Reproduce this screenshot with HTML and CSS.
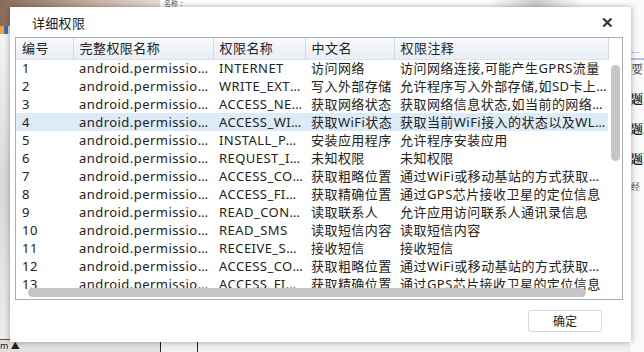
FILE: index.html
```html
<!doctype html>
<html lang="zh-CN">
<head>
    <meta charset="UTF-8">
    <title>详细权限</title>
    <link rel="stylesheet" href="styles.css">
</head>
<body>

<div class="app">
    <div class="app-left">
        <div class="photo"></div>
        <div class="toolbar"></div>
        <div class="side-list"></div>
        <div class="side-foot">m ▲</div>
    </div>
    <div class="app-main">
        <div class="main-top">名称 ：</div>
        <div class="main-body"></div>
        <div class="main-foot">
            <span class="cell"></span>
            <span class="cell"></span>
        </div>
    </div>
    <div class="app-right">
        <p class="blue">...</p>
        <p>要</p>
        <p class="bold">题</p>
        <p class="bold">题</p>
        <p class="bold">题</p>
        <p class="small">经</p>
    </div>
</div>

<div class="modal-dialog">
    <div class="header">
        <h3>详细权限</h3>
        <a href="#" class="close">✕</a>
    </div>
    <div class="grid-box">
        <table class="grid">
            <colgroup>
                <col class="c-num">
                <col class="c-full">
                <col class="c-name">
                <col class="c-cn">
                <col class="c-note">
            </colgroup>
            <thead>
                <tr>
                    <th>编号</th>
                    <th>完整权限名称</th>
                    <th>权限名称</th>
                    <th>中文名</th>
                    <th>权限注释</th>
                </tr>
            </thead>
            <tbody>
                <tr><td>1</td><td>android.permission.INTERNET</td><td>INTERNET</td><td>访问网络</td><td>访问网络连接,可能产生GPRS流量</td></tr>
                <tr><td>2</td><td>android.permission.WRITE_EXTERNAL_STORAGE</td><td>WRITE_EXTERNAL_STORAGE</td><td>写入外部存储</td><td>允许程序写入外部存储,如SD卡上写文件</td></tr>
                <tr><td>3</td><td>android.permission.ACCESS_NETWORK_STATE</td><td>ACCESS_NETWORK_STATE</td><td>获取网络状态</td><td>获取网络信息状态,如当前的网络连接是否有效</td></tr>
                <tr class="selected"><td>4</td><td>android.permission.ACCESS_WIFI_STATE</td><td>ACCESS_WIFI_STATE</td><td>获取WiFi状态</td><td>获取当前WiFi接入的状态以及WLAN热点的信息</td></tr>
                <tr><td>5</td><td>android.permission.INSTALL_PACKAGES</td><td>INSTALL_PACKAGES</td><td>安装应用程序</td><td>允许程序安装应用</td></tr>
                <tr><td>6</td><td>android.permission.REQUEST_INSTALL_PACKAGES</td><td>REQUEST_INSTALL_PACKAGES</td><td>未知权限</td><td>未知权限</td></tr>
                <tr><td>7</td><td>android.permission.ACCESS_COARSE_LOCATION</td><td>ACCESS_COARSE_LOCATION</td><td>获取粗略位置</td><td>通过WiFi或移动基站的方式获取用户错略的经纬度信息</td></tr>
                <tr><td>8</td><td>android.permission.ACCESS_FINE_LOCATION</td><td>ACCESS_FINE_LOCATION</td><td>获取精确位置</td><td>通过GPS芯片接收卫星的定位信息</td></tr>
                <tr><td>9</td><td>android.permission.READ_CONTACTS</td><td>READ_CONTACTS</td><td>读取联系人</td><td>允许应用访问联系人通讯录信息</td></tr>
                <tr><td>10</td><td>android.permission.READ_SMS</td><td>READ_SMS</td><td>读取短信内容</td><td>读取短信内容</td></tr>
                <tr><td>11</td><td>android.permission.RECEIVE_SMS</td><td>RECEIVE_SMS</td><td>接收短信</td><td>接收短信</td></tr>
                <tr><td>12</td><td>android.permission.ACCESS_COARSE_LOCATION</td><td>ACCESS_COARSE_LOCATION</td><td>获取粗略位置</td><td>通过WiFi或移动基站的方式获取用户错略的经纬度信息</td></tr>
                <tr><td>13</td><td>android.permission.ACCESS_FINE_LOCATION</td><td>ACCESS_FINE_LOCATION</td><td>获取精确位置</td><td>通过GPS芯片接收卫星的定位信息</td></tr>
            </tbody>
        </table>
        <div class="vscroll"><span class="thumb"></span></div>
        <div class="hscroll"><span class="thumb"></span></div>
    </div>
    <div class="footer">
        <a href="#" class="btn">确定</a>
    </div>
</div>

</body>
</html>
```

FILE: styles.css
```css
* {
    margin: 0;
    padding: 0;
    box-sizing: border-box;
}
a {
    color: #222;
    text-decoration: none;
}
body {
    width: 644px;
    height: 352px;
    overflow: hidden;
    position: relative;
    background: #f2f2f2;
    font-family: "Noto Sans", "Noto Sans CJK SC", sans-serif;
    color: #222;
}

/* 背后的主窗口 */
.app {
    display: flex;
    height: 352px;
}
.app-left {
    width: 160px;
    display: flex;
    flex-direction: column;
    background: #e9e9e9;
}
.photo {
    height: 26px;
    background: linear-gradient(90deg, #8a6a58, #c9b3a6 60%, #e8ddd6);
}
.toolbar {
    height: 8px;
    background: linear-gradient(90deg, #f3a53a 0 4px, #3b6fb6 4px 8px, #dcdcdc 8px);
}
.side-list {
    flex: 1;
    background: linear-gradient(180deg, #f4f4f4, #d8d8d8 50%, #ececec);
    border-bottom: 1px solid #555;
}
.side-foot {
    height: 12px;
    font-size: 9px;
    line-height: 12px;
    background: #e0e0e0;
}
.app-main {
    flex: 1;
    display: flex;
    flex-direction: column;
    background: #fff;
}
.main-top {
    height: 8px;
    font-size: 7px;
    line-height: 7px;
    padding-left: 4px;
    color: #555;
    background: linear-gradient(90deg, #fff 70%, #ccc 80%, #fff 90%);
}
.main-body {
    flex: 1;
}
.main-foot {
    height: 12px;
    display: flex;
    background: #f0f0f0;
}
.main-foot .cell {
    width: 37px;
    border-left: 1px solid #222;
}
.app-right {
    width: 14px;
    overflow: hidden;
    background: #fafafa;
    font-family: "Noto Serif CJK SC", "Noto Sans CJK SC", serif;
    font-size: 12px;
    padding-top: 44px;
}
.app-right p {
    height: 30px;
    padding-left: 1px;
}
.app-right .blue {
    height: 16px;
    color: #3b6fb6;
    font-size: 8px;
    border-bottom: 2px solid #a9c7ea;
}
.app-right .bold {
    font-weight: bold;
}
.app-right .small {
    font-size: 9px;
}

/* 详细权限弹框 */
.modal-dialog {
    position: absolute;
    left: 10px;
    top: 7px;
    width: 621px;
    height: 335px;
    background: #fff;
    box-shadow: 0 0 6px rgba(0,0,0,0.35);
    display: flex;
    flex-direction: column;
}
.header {
    height: 30px;
    display: flex;
    align-items: center;
    justify-content: space-between;
    padding: 0 17px 0 22px;
}
.header h3 {
    font-family: "Noto Sans CJK SC", sans-serif;
    font-size: 13px;
    font-weight: normal;
    color: #222;
    letter-spacing: 0.3px;
}
.header .close {
    font-size: 15px;
    font-weight: bold;
    color: #333;
}
.grid-box {
    position: relative;
    margin-left: 5px;
    width: 608px;
    height: 263px;
    border: 1px solid #a9aeb3;
    overflow: hidden;
}
.grid {
    table-layout: fixed;
    border-collapse: collapse;
    width: 592px;
    font-size: 13px;
    letter-spacing: 0.45px;
    line-height: 16px;
    color: #222;
}
.c-num { width: 57px; }
.c-full { width: 140px; }
.c-name { width: 92px; }
.c-cn { width: 89px; }
.c-note { width: 214px; }
.grid th,
.grid td {
    text-align: left;
    font-weight: normal;
    white-space: nowrap;
    overflow: hidden;
    text-overflow: ellipsis;
    padding: 0 1px 0 6px;
}
.grid th {
    height: 21px;
    background: linear-gradient(180deg, #f7f9fc, #e8eef5);
    border-right: 1px solid #d3dae2;
    border-bottom: 1px solid #dde3ea;
}
.grid td {
    height: 18px;
}
.grid .selected td {
    background: #dcebf7;
}
.vscroll {
    position: absolute;
    right: 2px;
    top: 27px;
    width: 9px;
    height: 96px;
}
.vscroll .thumb {
    display: block;
    height: 100%;
    border-radius: 5px;
    background: #c6c6c6;
}
.hscroll {
    position: absolute;
    left: 12px;
    bottom: 2px;
    width: 558px;
    height: 9px;
}
.hscroll .thumb {
    display: block;
    height: 100%;
    border-radius: 5px;
    background: #c6c6c6;
}
.footer {
    flex: 1;
    display: flex;
    justify-content: flex-end;
    align-items: center;
    padding-right: 29px;
}
.btn {
    width: 74px;
    height: 22px;
    border: 1px solid #d8d8d8;
    border-radius: 3px;
    font-family: "Noto Sans CJK SC", sans-serif;
    font-size: 12px;
    line-height: 20px;
    text-align: center;
}
```
